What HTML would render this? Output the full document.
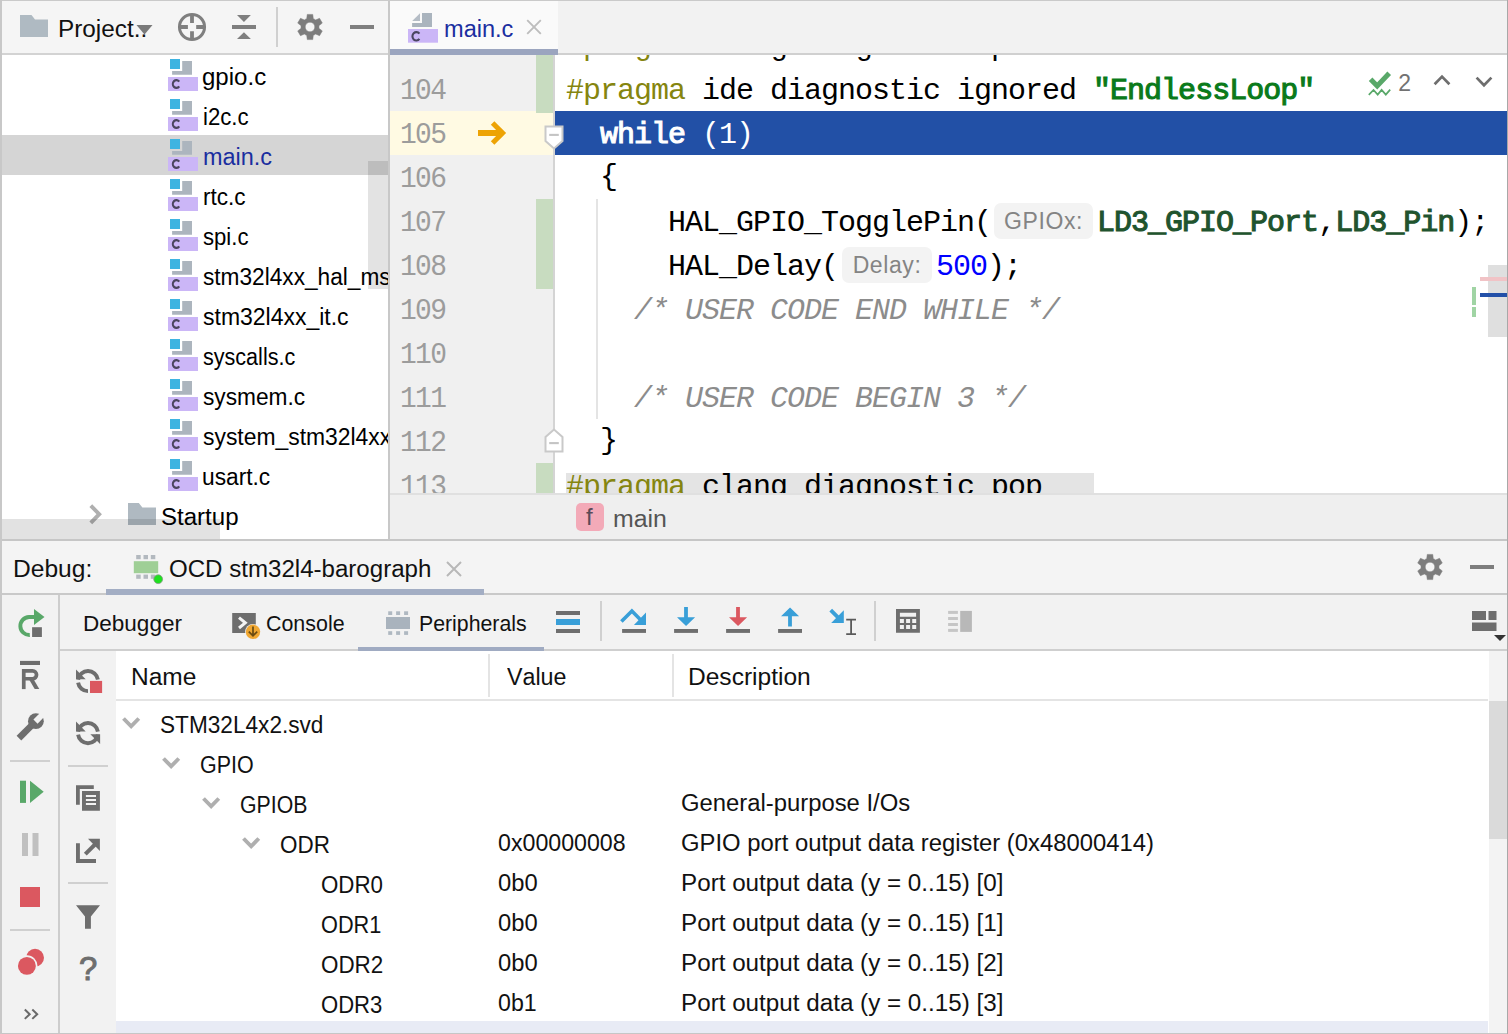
<!DOCTYPE html>
<html><head><meta charset="utf-8">
<style>
*{box-sizing:border-box;margin:0;padding:0}
html,body{width:1508px;height:1034px;overflow:hidden;background:#fff}
body{font-family:"Liberation Sans",sans-serif;color:#000;position:relative}
.abs{position:absolute}
.ui{font-family:"Liberation Sans",sans-serif;font-size:22px;white-space:nowrap;position:absolute;line-height:40px;height:40px;transform-origin:0 0;font-kerning:none}
.mono{font-family:"Liberation Mono",monospace;white-space:pre;position:absolute}
/* frame */
#botb{left:0;top:1033px;width:1508px;height:1px;background:#c6c6c6}
#topb{left:0;top:0;width:1508px;height:1px;background:#cacaca}
#leftb{left:0;top:0;width:2px;height:1034px;background:#c8c8c8}
#rightb{left:1507px;top:0;width:1px;height:1034px;background:#a8a8a8}
/* project panel */
#ptool{left:2px;top:1px;width:386px;height:53px;background:#f5f5f5}
#ptoolb{left:2px;top:53px;width:386px;height:2px;background:#d3d3d3}
#tree{left:2px;top:55px;width:386px;height:484px;background:#fff;overflow:hidden}
#vdiv{left:388px;top:0;width:2px;height:540px;background:#c8c8c8}
/* editor */
#tabs{left:390px;top:1px;width:1117px;height:53px;background:#f2f2f2}
#tabsb{left:390px;top:53px;width:1117px;height:2px;background:#d0d0d0}
#gutter{left:390px;top:55px;width:163px;height:438px;background:#f0f0f0}
#gline{left:553px;top:55px;width:2px;height:438px;background:#d4d4d4}
#code{left:555px;top:55px;width:952px;height:438px;background:#fff;overflow:hidden}
#crumbs{left:390px;top:493px;width:1117px;height:46px;background:#efefef}
#crumbst{left:390px;top:493px;width:1117px;height:2px;background:#e0e0e0}
/* debug */
#hdiv{left:0;top:539px;width:1508px;height:2px;background:#c6c6c6}
#dhead{left:2px;top:541px;width:1505px;height:52px;background:#f4f4f4}
#dheadb{left:2px;top:593px;width:1505px;height:2px;background:#c9c9c9}
#dleft{left:2px;top:595px;width:56px;height:439px;background:#f2f2f2}
#dleftb{left:58px;top:595px;width:2px;height:439px;background:#cdcdcd}
#dtool{left:60px;top:595px;width:1447px;height:54px;background:#f2f2f2}
#dtoolb{left:60px;top:649px;width:1447px;height:2px;background:#cfcfcf}
#dleft2{left:60px;top:651px;width:56px;height:383px;background:#f2f2f2}
#table{left:116px;top:651px;width:1373px;height:383px;background:#fff}
#vsb{left:1489px;top:651px;width:18px;height:383px;background:#f3f3f3}

.ln{font-size:30px;letter-spacing:-1.8px;color:#9c9c9c;line-height:44px;height:44px;transform:scaleX(0.93);transform-origin:0 0}
.cl{font-size:30px;letter-spacing:-1px;color:#000;line-height:44px;height:44px}
.pp{color:#85850f}
.str{color:#0a7a1a;-webkit-text-stroke:1.1px #0a7a1a}
.kwsel{color:#fff;-webkit-text-stroke:1.1px #fff}
.mac{color:#1f542e;-webkit-text-stroke:1.1px #1f542e}
.num{color:#0000ff}
.cm{color:#8c8c8c;font-style:italic}
.hint{display:inline-block;height:36px;line-height:36px;margin:0 4px;border-radius:7px;background:#f3f3f3;color:#848484;font-family:"Liberation Sans",sans-serif;font-size:23px;letter-spacing:0.6px;text-align:center;vertical-align:2px}
</style></head><body>
<div class="abs" id="ptool"></div><div class="abs" id="ptoolb"></div>
<div class="abs" id="tree"></div>
<div class="abs" id="tabs"></div><div class="abs" id="tabsb"></div>
<div class="abs" id="gutter"></div><div class="abs" id="gline"></div>
<div class="abs" id="code"></div>
<div class="abs" id="crumbs"></div><div class="abs" id="crumbst"></div>
<div class="abs" id="vdiv"></div>
<div class="abs" id="dhead"></div><div class="abs" id="dheadb"></div>
<div class="abs" id="dleft"></div><div class="abs" id="dleftb"></div>
<div class="abs" id="dtool"></div><div class="abs" id="dtoolb"></div>
<div class="abs" id="dleft2"></div>
<div class="abs" id="table"></div>
<div class="abs" id="vsb"></div>
<svg width="0" height="0" style="position:absolute"><defs>
<g id="cfile">
  <path d="M12.2 2.1 H22 V15.8 H2.1 V12.1 H12.2 Z" fill="#acb5be"/>
  <rect x="0" y="0" width="10" height="10" fill="#3eb4e1"/>
  <rect x="-2" y="18" width="30" height="14" fill="#cbb6f7"/>
  <path d="M9.2 27.3 A3.5 3.9 0 1 1 9.2 22.7" fill="none" stroke="#4b465f" stroke-width="2.2"/>
</g>
<g id="chev"><path d="M1.5 1.5 L9.15 9.3 L16.8 1.5" fill="none" stroke="#afafaf" stroke-width="3.9"/></g>
<g id="gear">
  <path fill="#7d7d7d" fill-rule="evenodd" stroke="#7d7d7d" stroke-width="0.5" stroke-linejoin="round" d="M-3.30 -8.37L-2.75 -12.60L2.75 -12.60L3.30 -8.37A9.0 9.0 0 0 1 5.60 -7.04L9.54 -8.68L12.29 -3.92L8.90 -1.33A9.0 9.0 0 0 1 8.90 1.33L12.29 3.92L9.54 8.68L5.60 7.04A9.0 9.0 0 0 1 3.30 8.37L2.75 12.60L-2.75 12.60L-3.30 8.37A9.0 9.0 0 0 1 -5.60 7.04L-9.54 8.68L-12.29 3.92L-8.90 1.33A9.0 9.0 0 0 1 -8.90 -1.33L-12.29 -3.92L-9.54 -8.68L-5.60 -7.04A9.0 9.0 0 0 1 -3.30 -8.37ZM4.8 0A4.8 4.8 0 1 0 -4.8 0A4.8 4.8 0 1 0 4.8 0Z"/>
</g>
</defs></svg>
<svg class="abs" style="left:20px;top:15px" width="30" height="24" viewBox="0 0 30 24"><path d="M0 0h11.5l3.5 4.5H28V22H0z" fill="#afbac2"/></svg>
<div class="ui" style="left:57.79px;top:9px;font-size:23px;color:#111;transform:scaleX(1.0572);">Project..</div>
<svg class="abs" style="left:136px;top:24px" width="18" height="12" viewBox="0 0 18 12"><path d="M0.5 1h16L8.5 10.4z" fill="#7a7a7a"/></svg>
<svg class="abs" style="left:176px;top:11px" width="32" height="32" viewBox="0 0 32 32"><circle cx="16" cy="16" r="12.55" fill="none" stroke="#7f7f7f" stroke-width="3"/><path d="M16 3V11.9M16 20.2V29M3 16H11.9M20.2 16H29" stroke="#7f7f7f" stroke-width="3.8"/></svg>
<svg class="abs" style="left:231px;top:14px" width="26" height="26" viewBox="0 0 26 26"><path d="M1 11.1h24v3.8H1z M6 0.9h13.9L12.95 7.9z M12.95 18.2l6.95 6.8H6z" fill="#7f7f7f"/></svg>
<div class="abs" style="left:276px;top:7px;width:2px;height:40px;background:#d0d0d0"></div>
<svg class="abs" style="left:294.7px;top:12.2px" width="30" height="30" viewBox="-15 -15 30 30"><use href="#gear"/></svg>
<div class="abs" style="left:350px;top:25px;width:24px;height:4px;background:#7f7f7f"></div>

<div class="abs" style="left:2px;top:55px;width:386px;height:485px;overflow:hidden"><div class="abs" style="left:0;top:80px;width:386px;height:40px;background:#d5d5d5"></div>
<svg class="abs" style="left:166px;top:3px;overflow:visible" width="34" height="36"><g transform="translate(2,1)"><use href="#cfile"/></g></svg>
<div class="ui" style="left:200.35px;top:2px;font-size:23px;color:#000;transform:scaleX(1.0452);">gpio.c</div>
<svg class="abs" style="left:166px;top:43px;overflow:visible" width="34" height="36"><g transform="translate(2,1)"><use href="#cfile"/></g></svg>
<div class="ui" style="left:200.65px;top:42px;font-size:23px;color:#000;transform:scaleX(0.9646);">i2c.c</div>
<svg class="abs" style="left:166px;top:83px;overflow:visible" width="34" height="36"><g transform="translate(2,1)"><use href="#cfile"/></g></svg>
<div class="ui" style="left:200.57px;top:82px;font-size:23px;color:#1a2ea0;transform:scaleX(1.0198);">main.c</div>
<svg class="abs" style="left:166px;top:123px;overflow:visible" width="34" height="36"><g transform="translate(2,1)"><use href="#cfile"/></g></svg>
<div class="ui" style="left:200.63px;top:122px;font-size:23px;color:#000;transform:scaleX(0.9807);">rtc.c</div>
<svg class="abs" style="left:166px;top:163px;overflow:visible" width="34" height="36"><g transform="translate(2,1)"><use href="#cfile"/></g></svg>
<div class="ui" style="left:200.82px;top:162px;font-size:23px;color:#000;transform:scaleX(0.9610);">spi.c</div>
<svg class="abs" style="left:166px;top:203px;overflow:visible" width="34" height="36"><g transform="translate(2,1)"><use href="#cfile"/></g></svg>
<div class="ui" style="left:200.81px;top:202px;font-size:23px;color:#000;transform:scaleX(0.9850);">stm32l4xx_hal_msp.c</div>
<svg class="abs" style="left:166px;top:243px;overflow:visible" width="34" height="36"><g transform="translate(2,1)"><use href="#cfile"/></g></svg>
<div class="ui" style="left:200.80px;top:242px;font-size:23px;color:#000;transform:scaleX(0.9993);">stm32l4xx_it.c</div>
<svg class="abs" style="left:166px;top:283px;overflow:visible" width="34" height="36"><g transform="translate(2,1)"><use href="#cfile"/></g></svg>
<div class="ui" style="left:200.84px;top:282px;font-size:23px;color:#000;transform:scaleX(0.9372);">syscalls.c</div>
<svg class="abs" style="left:166px;top:323px;overflow:visible" width="34" height="36"><g transform="translate(2,1)"><use href="#cfile"/></g></svg>
<div class="ui" style="left:200.81px;top:322px;font-size:23px;color:#000;transform:scaleX(0.9873);">sysmem.c</div>
<svg class="abs" style="left:166px;top:363px;overflow:visible" width="34" height="36"><g transform="translate(2,1)"><use href="#cfile"/></g></svg>
<div class="ui" style="left:200.80px;top:362px;font-size:23px;color:#000;transform:scaleX(0.9950);">system_stm32l4xx.c</div>
<svg class="abs" style="left:166px;top:403px;overflow:visible" width="34" height="36"><g transform="translate(2,1)"><use href="#cfile"/></g></svg>
<div class="ui" style="left:199.92px;top:402px;font-size:23px;color:#000;transform:scaleX(0.9881);">usart.c</div>
<svg class="abs" style="left:86px;top:448px" width="16" height="24" viewBox="0 0 16 24"><path d="M2.8 2.6 L11.2 11.2 L2.8 19.8" fill="none" stroke="#afafaf" stroke-width="3.9"/></svg>
<svg class="abs" style="left:126px;top:448px" width="30" height="24" viewBox="0 0 30 24"><path d="M0 0h10.8l3.6 4.6H28V22H0z" fill="#afb9c1"/></svg>
<div class="ui" style="left:159.45px;top:442px;font-size:23px;color:#000;transform:scaleX(1.0458);">Startup</div>
<div class="abs" style="left:366px;top:106px;width:20px;height:128px;background:rgba(0,0,0,0.11)"></div>
<div class="abs" style="left:0;top:464px;width:217.5px;height:20px;background:rgba(0,0,0,0.115)"></div></div>
<div class="abs" style="left:390px;top:1px;width:168px;height:48px;background:#fafafa"></div>
<div class="abs" style="left:390px;top:49px;width:168px;height:6px;background:#9ba5bf"></div>
<svg class="abs" style="left:408px;top:12px;overflow:visible" width="32" height="32">
  <path d="M4.2 8.9 L12 1.2 L12 8.9 Z" fill="#b5bdc6"/>
  <path d="M14 1.1 H24 V14.9 H4.1 V11 H14 Z" fill="#aab4be"/>
  <rect x="0" y="17" width="30" height="13.7" fill="#cbb6f7"/>
  <path d="M11.4 26.9 A3.9 4.2 0 1 1 11.4 21.7" fill="none" stroke="#4a4560" stroke-width="2.1"/>
</svg>
<div class="ui" style="left:444.46px;top:9px;font-size:23px;color:#1a2ea0;transform:scaleX(1.0244);">main.c</div>
<svg class="abs" style="left:526px;top:19px" width="16" height="16" viewBox="0 0 16 16"><path d="M1.2 1.2L14.8 14.8M14.8 1.2L1.2 14.8" stroke="#bdbdbd" stroke-width="1.9"/></svg>

<div class="abs" style="left:390px;top:55px;width:163px;height:438px;overflow:hidden"><div class="abs" style="left:0;top:56px;width:163px;height:44px;background:#fffae3"></div>
<div class="abs" style="left:146px;top:0px;width:17px;height:58px;background:#c8dcc0"></div>
<div class="abs" style="left:146px;top:144px;width:17px;height:90px;background:#c8dcc0"></div>
<div class="abs" style="left:146px;top:408px;width:17px;height:30px;background:#c8dcc0"></div>
<div class="mono ln" style="left:10px;top:-30px">103</div>
<div class="mono ln" style="left:10px;top:14px">104</div>
<div class="mono ln" style="left:10px;top:58px">105</div>
<div class="mono ln" style="left:10px;top:102px">106</div>
<div class="mono ln" style="left:10px;top:146px">107</div>
<div class="mono ln" style="left:10px;top:190px">108</div>
<div class="mono ln" style="left:10px;top:234px">109</div>
<div class="mono ln" style="left:10px;top:278px">110</div>
<div class="mono ln" style="left:10px;top:322px">111</div>
<div class="mono ln" style="left:10px;top:366px">112</div>
<div class="mono ln" style="left:10px;top:410px">113</div>
<svg class="abs" style="left:88px;top:66px" width="30" height="24" viewBox="0 0 30 24"><path d="M0 12H24" fill="none" stroke="#eda305" stroke-width="6"/><path d="M14.6 2 L24.6 12 L14.6 22" fill="none" stroke="#eda305" stroke-width="5"/></svg></div>
<div class="abs" style="left:555px;top:55px;width:952px;height:438px;overflow:hidden"><div class="abs" style="left:0;top:56px;width:952px;height:44px;background:#2250a6"></div>
<div class="abs" style="left:11px;top:418px;width:528px;height:30px;background:#e4e4e4"></div>
<div class="abs" style="left:41px;top:144px;width:2px;height:220px;background:#e4e4e4"></div>
<div class="mono cl" style="left:11px;top:-30px"><span class="pp">#pragma</span> clang diagnostic push</div>
<div class="mono cl" style="left:11px;top:14px"><span class="pp">#pragma</span> ide diagnostic ignored <span class="str">"EndlessLoop"</span></div>
<div class="mono cl" style="left:11px;top:58px">  <span class="kwsel">while</span><span style="color:#fff"> (1)</span></div>
<div class="mono cl" style="left:11px;top:102px">  <span style="position:relative;top:-2px">{</span></div>
<div class="mono cl" style="left:11px;top:146px">      HAL_GPIO_TogglePin(<span class="hint" style="width:99px;margin-left:3px">GPIOx:</span><span class="mac">LD3_GPIO_Port</span>,<span class="mac">LD3_Pin</span>);</div>
<div class="mono cl" style="left:11px;top:190px">      HAL_Delay(<span class="hint" style="width:90px">Delay:</span><span class="num">500</span>);</div>
<div class="mono cl" style="left:11px;top:234px">    <span class="cm">/* USER CODE END WHILE */</span></div>
<div class="mono cl" style="left:11px;top:322px">    <span class="cm">/* USER CODE BEGIN 3 */</span></div>
<div class="mono cl" style="left:11px;top:366px">  <span style="position:relative;top:-2px">}</span></div>
<div class="mono cl" style="left:11px;top:410px"><span class="pp">#pragma</span> clang diagnostic pop</div></div>
<svg class="abs" style="left:544px;top:125px" width="20" height="26" viewBox="0 0 20 26"><path d="M1.5 1.6h17v14.4L10 23.4 1.5 16z" fill="#fff" stroke="#c9c9c9" stroke-width="2"/><path d="M5.2 9.9h9.6" stroke="#c4c4c4" stroke-width="2.1"/></svg>
<svg class="abs" style="left:544px;top:427px" width="20" height="26" viewBox="0 0 20 26"><path d="M1.5 24.4h17v-14.4L10 2.6 1.5 10z" fill="#fff" stroke="#c9c9c9" stroke-width="2"/><path d="M5.2 16.1h9.6" stroke="#c4c4c4" stroke-width="2.1"/></svg>

<svg class="abs" style="left:1366px;top:70px" width="28" height="28" viewBox="0 0 28 28"><path d="M4.6 9.2 L11.2 16 L23.2 3.2" fill="none" stroke="#59a869" stroke-width="5"/><path d="M2.8 24.8 L7.5 19.9 L11.7 24.6 L15.6 19.9 L19.8 24.6 L24.2 19.6" fill="none" stroke="#59a869" stroke-width="1.7"/></svg>
<div class="ui" style="left:1398.30px;top:63px;font-size:23px;color:#727272;transform:scaleX(1.0000);">2</div>
<svg class="abs" style="left:1432px;top:72px" width="20" height="16" viewBox="0 0 20 16"><path d="M2.6 12.2 L10 4.6 L17.4 12.2" fill="none" stroke="#6e6e6e" stroke-width="2.7"/></svg>
<svg class="abs" style="left:1474px;top:74px" width="20" height="16" viewBox="0 0 20 16"><path d="M2.6 3.6 L10 11.2 L17.4 3.6" fill="none" stroke="#6e6e6e" stroke-width="2.7"/></svg>

<div class="abs" style="left:1488px;top:265px;width:19px;height:72px;background:#dfdfdf"></div>
<div class="abs" style="left:1480px;top:277px;width:27px;height:4px;background:#f1c3c6"></div>
<div class="abs" style="left:1480px;top:293px;width:27px;height:4px;background:#2350a8"></div>
<div class="abs" style="left:1472px;top:287px;width:4px;height:18px;background:#a0d4a4"></div>
<div class="abs" style="left:1472px;top:307px;width:4px;height:10px;background:#a0d4a4"></div>

<div class="abs" style="left:576px;top:503px;width:28px;height:28px;border-radius:5px;background:#f3aab8"></div>
<div class="ui" style="left:586px;top:497px;font-size:24px;color:#5a4a58">f</div>
<div class="ui" style="left:613.38px;top:499px;font-size:23px;color:#555;transform:scaleX(1.0810);">main</div>

<div class="ui" style="left:13.27px;top:549px;font-size:23px;color:#111;transform:scaleX(1.0684);">Debug:</div>
<div class="abs" style="left:106px;top:589px;width:378px;height:6px;background:#a3aec4"></div>
<svg class="abs" style="left:130px;top:550px" width="40" height="40" viewBox="130 550 40 40">
  <rect x="133.8" y="561.2" width="24.4" height="12" fill="#9fcf96"/>
  <g fill="#b3b9bf"><rect x="136.2" y="555" width="4.5" height="4.2"/><rect x="143.5" y="555" width="4.5" height="4.2"/><rect x="150.8" y="555" width="4.5" height="4.2"/><rect x="136.2" y="574.6" width="4.5" height="4.2"/><rect x="143.5" y="574.6" width="4.5" height="4.2"/><rect x="150.8" y="574.6" width="4.5" height="4.2"/></g>
  <circle cx="158.2" cy="579.2" r="4.4" fill="#1fe01f" stroke="#8a9a8a" stroke-width="0.8"/>
</svg>
<div class="ui" style="left:168.95px;top:549px;font-size:23px;color:#111;transform:scaleX(1.0471);">OCD stm32l4-barograph</div>
<svg class="abs" style="left:446px;top:561px" width="16" height="16" viewBox="0 0 16 16"><path d="M1 1L15 15M15 1L1 15" stroke="#b8b8b8" stroke-width="2"/></svg>
<svg class="abs" style="left:1414.9px;top:552px" width="30" height="30" viewBox="-15 -15 30 30"><use href="#gear"/></svg>
<div class="abs" style="left:1470px;top:565px;width:24px;height:4px;background:#7d7d7d"></div>

<div class="ui" style="left:83.14px;top:604px;font-size:22px;color:#111;transform:scaleX(1.0243);">Debugger</div>
<svg class="abs" style="left:228px;top:608px" width="36" height="36" viewBox="228 608 36 36">
  <rect x="232.2" y="613" width="23.6" height="20" fill="#6e6e6e"/>
  <path d="M239 617.6 L245.3 622.8 L239 628" fill="none" stroke="#f4f4f4" stroke-width="3"/>
  <circle cx="253" cy="631.8" r="7.9" fill="#f1f1f1"/>
  <circle cx="253" cy="631.8" r="7.2" fill="#f0a732"/>
  <path d="M253 626.6v9 M248.8 631.6 L253 635.9 L257.2 631.6" fill="none" stroke="#6a4a10" stroke-width="1.7"/>
</svg>
<div class="ui" style="left:265.68px;top:604px;font-size:22px;color:#111;transform:scaleX(0.9730);">Console</div>
<svg class="abs" style="left:380px;top:605px" width="36" height="36" viewBox="380 605 36 36">
  <rect x="386" y="617" width="24" height="12" fill="#a9b3bd"/>
  <g fill="#afb8c1"><rect x="388.2" y="611.3" width="4" height="3.7"/><rect x="396.1" y="611.3" width="4" height="3.7"/><rect x="404.1" y="611.3" width="4" height="3.7"/><rect x="388.2" y="631.2" width="4" height="3.7"/><rect x="396.1" y="631.2" width="4" height="3.7"/><rect x="404.1" y="631.2" width="4" height="3.7"/></g>
</svg>
<div class="ui" style="left:419.44px;top:604px;font-size:22px;color:#111;transform:scaleX(0.9673);">Peripherals</div>
<div class="abs" style="left:358px;top:647px;width:186px;height:4px;background:#a0abc2"></div>
<!-- threads/list icon -->
<svg class="abs" style="left:555px;top:610px" width="28" height="26" viewBox="0 0 28 26"><rect x="1" y="1" width="24" height="4" fill="#6e6e6e"/><rect x="1" y="9" width="24" height="6" fill="#399fd8"/><rect x="1" y="19" width="24" height="4" fill="#6e6e6e"/></svg>
<div class="abs" style="left:600px;top:601px;width:2px;height:40px;background:#d0d0d0"></div>
<!-- step over -->
<svg class="abs" style="left:620px;top:606px" width="30" height="30" viewBox="0 0 30 30"><path d="M1.4 15.6 L11.9 5.1 L20.5 13.7" fill="none" stroke="#399fd8" stroke-width="3.6"/><path d="M26 6.6V19.1H13.9z" fill="#399fd8"/><rect x="2.1" y="23" width="23.9" height="3.9" fill="#6e6e6e"/></svg>
<!-- step into -->
<svg class="abs" style="left:672px;top:606px" width="30" height="30" viewBox="0 0 30 30"><path d="M12.1 1h3.8v10.2h7.2L14.05 20 5 11.2h7.1z" fill="#399fd8"/><rect x="2.1" y="23" width="23.9" height="3.9" fill="#6e6e6e"/></svg>
<!-- force step into -->
<svg class="abs" style="left:724px;top:606px" width="30" height="30" viewBox="0 0 30 30"><path d="M12.1 1h3.8v10.2h7.2L14.05 20 5 11.2h7.1z" fill="#db5860"/><rect x="2.1" y="23" width="23.9" height="3.9" fill="#6e6e6e"/></svg>
<!-- step out -->
<svg class="abs" style="left:776px;top:606px" width="30" height="30" viewBox="0 0 30 30"><path d="M12.1 20.5h3.8v-10.2h7.2L14.05 1.5 5 10.3h7.1z" fill="#399fd8"/><rect x="2.1" y="23" width="23.9" height="3.9" fill="#6e6e6e"/></svg>
<!-- run to cursor -->
<svg class="abs" style="left:824px;top:604px" width="40" height="36" viewBox="824 604 40 36"><path d="M830.7 610.1 L839.5 618.9" stroke="#399fd8" stroke-width="3.8" fill="none"/><path d="M843.8 610.2 V623 H831.2z" fill="#399fd8"/><path d="M846.2 619.6h9.8 M846.2 634.1h9.8 M851.1 619.6v14.5" stroke="#5a5a5a" stroke-width="1.8" fill="none"/></svg>
<div class="abs" style="left:874px;top:601px;width:2px;height:40px;background:#d0d0d0"></div>
<!-- calculator -->
<svg class="abs" style="left:890px;top:604px" width="36" height="36" viewBox="890 604 36 36"><path fill="#6e6e6e" fill-rule="evenodd" d="M896 609h23.9v23.8H896z M899.9 612.8v4h16.2v-4z M899.9 619v4h4v-4z M906.1 619v4h4v-4z M912.2 619v4h4v-4z M899.9 625.1v4h4v-4z M906.1 625.1v4h4v-4z M912.2 625.1v4h4v-4z"/></svg>
<!-- trace (disabled) -->
<svg class="abs" style="left:944px;top:604px" width="36" height="36" viewBox="944 604 36 36"><g fill="#c6c6c6"><rect x="948.1" y="610.9" width="9.8" height="3"/><rect x="948.1" y="617" width="9.8" height="3"/><rect x="948.1" y="623" width="9.8" height="3"/><rect x="948.1" y="628.9" width="9.8" height="3"/></g><rect x="960.2" y="610.9" width="11.7" height="21" fill="#b8b8b8"/></svg>
<!-- layout -->
<svg class="abs" style="left:1472px;top:610px" width="36" height="34" viewBox="0 0 36 34"><g fill="#6e6e6e"><rect x="0" y="1" width="14" height="9"/><rect x="16.5" y="1" width="8" height="9"/><rect x="0" y="12.5" width="24.5" height="8.5"/></g><path d="M22 25h12l-6 6z" fill="#333"/></svg>


<!-- rerun -->
<svg class="abs" style="left:16px;top:607px" width="32" height="32" viewBox="0 0 32 32"><path d="M13.8 28.05 A9.05 9.05 0 0 1 13 9.95 H19" fill="none" stroke="#59a869" stroke-width="3.9"/><path d="M18 2 L28.5 10 L18 18z" fill="#59a869"/><rect x="15.4" y="19.5" width="11.2" height="11.2" fill="#f6f6f6"/><rect x="16.1" y="20.2" width="9.8" height="9.8" fill="#6e6e6e"/></svg>
<!-- R bar -->
<svg class="abs" style="left:14px;top:656px" width="36" height="40" viewBox="14 656 36 40"><rect x="20" y="660.9" width="20" height="4.1" fill="#6e6e6e"/><rect x="21.9" y="669" width="3.7" height="20.1" fill="#6e6e6e"/><path d="M23.75 670.85 H32.6 A3.95 3.95 0 0 1 32.6 678.75 H23.75" fill="none" stroke="#6e6e6e" stroke-width="3.7"/><path d="M29.4 680 H34 L39.3 689.1 H34.7z" fill="#6e6e6e"/></svg>
<!-- wrench -->
<svg class="abs" style="left:10px;top:706px" width="40" height="40" viewBox="10 706 40 40"><g transform="translate(35.9 721.2) rotate(-45)"><rect x="-24" y="-3.3" width="20" height="6.6" fill="#6e6e6e"/><circle cx="0" cy="0" r="7.9" fill="#6e6e6e"/><rect x="-0.6" y="-2.9" width="10" height="5.8" fill="#f2f2f2"/></g></svg>
<div class="abs" style="left:10px;top:760px;width:40px;height:2px;background:#d0d0d0"></div>
<!-- resume -->
<svg class="abs" style="left:18px;top:778px" width="28" height="28" viewBox="0 0 28 28"><rect x="2" y="2.7" width="6" height="22.2" fill="#59a869"/><path d="M12 2.7 L25.7 13.8 L12 24.9z" fill="#59a869"/></svg>
<!-- pause -->
<svg class="abs" style="left:20px;top:832px" width="22" height="26" viewBox="0 0 22 26"><rect x="2" y="1" width="6" height="23" fill="#c0c0c0"/><rect x="12.5" y="1" width="6" height="23" fill="#c0c0c0"/></svg>
<!-- stop -->
<div class="abs" style="left:20px;top:887px;width:20px;height:20px;background:#db5860"></div>
<div class="abs" style="left:10px;top:929px;width:40px;height:2px;background:#d0d0d0"></div>
<!-- breakpoints -->
<svg class="abs" style="left:10px;top:940px" width="40" height="40" viewBox="10 940 40 40"><circle cx="35.05" cy="957.75" r="8.95" fill="#db5860"/><circle cx="26.9" cy="965.9" r="10.6" fill="#f2f2f2"/><circle cx="26.9" cy="965.9" r="8.95" fill="#db5860"/></svg>
<svg class="abs" style="left:22px;top:1006px" width="20" height="16" viewBox="0 0 20 16"><path d="M2.8 3.5 L7.7 8.2 L2.8 12.9 M10.3 3.5 L15.2 8.2 L10.3 12.9" fill="none" stroke="#6a6a6a" stroke-width="2"/></svg>


<!-- refresh + stop -->
<svg class="abs" style="left:70px;top:660px" width="40" height="40" viewBox="70 660 40 40"><path d="M78.1 679.6 A10 10 0 0 1 97.9 679.6" fill="none" stroke="#6e6e6e" stroke-width="3.9"/><path d="M78.1 682.6 A10 10 0 0 0 88 691.1" fill="none" stroke="#6e6e6e" stroke-width="3.9"/><path d="M76 669.5 V679.3 H85.7z" fill="#6e6e6e"/><rect x="89" y="679.9" width="14" height="14" fill="#f1f1f1"/><rect x="90" y="680.9" width="12.1" height="12.1" fill="#db5860"/></svg>
<!-- refresh -->
<svg class="abs" style="left:70px;top:712px" width="40" height="40" viewBox="70 712 40 40"><path d="M78.1 731.6 A10 10 0 0 1 97.9 731.6" fill="none" stroke="#6e6e6e" stroke-width="3.9"/><path d="M78.1 734.6 A10 10 0 0 0 97.9 734.6" fill="none" stroke="#6e6e6e" stroke-width="3.9"/><path d="M76 721.6 V731.5 H85.7z" fill="#6e6e6e"/><path d="M100.1 744.1 V734.3 H90.4z" fill="#6e6e6e"/></svg>
<div class="abs" style="left:68px;top:765px;width:40px;height:2px;background:#d0d0d0"></div>
<!-- copy -->
<svg class="abs" style="left:70px;top:780px" width="40" height="36" viewBox="70 780 40 36"><path d="M76 785.2 H93.8 V789 H79.8 V804.8 H76z" fill="#6e6e6e"/><path fill="#6e6e6e" fill-rule="evenodd" d="M82 791 H99.9 V810.8 H82z M85.9 795.1 v2 h10.1 v-2z M85.9 799.1 v2 h10.1 v-2z M85.9 803.1 v2 h10.1 v-2z"/></svg>
<!-- export -->
<svg class="abs" style="left:70px;top:832px" width="40" height="36" viewBox="70 832 40 36"><path d="M76 843.2 H79.9 V859.1 H96 V863 H76z" fill="#6e6e6e"/><path d="M88 838.8 H99.9 V850.9z" fill="#6e6e6e"/><path d="M85.3 854.2 L95.5 844" stroke="#6e6e6e" stroke-width="4" fill="none"/></svg>
<div class="abs" style="left:68px;top:882px;width:40px;height:2px;background:#d0d0d0"></div>
<!-- filter -->
<svg class="abs" style="left:70px;top:900px" width="40" height="34" viewBox="70 900 40 34"><path d="M76 905.2 H100 L90.9 916.6 V928.8 H85 V916.6 Z" fill="#6e6e6e"/></svg>
<div class="ui" style="left:79.02px;top:949px;font-size:33px;color:#6e6e6e;transform:scaleX(0.9948);-webkit-text-stroke:1px #6e6e6e;">?</div>

<div class="abs" style="left:116px;top:652px;width:1372px;height:382px;overflow:hidden"><div class="ui" style="left:15.18px;top:5px;font-size:23px;color:#111;transform:scaleX(1.0650);">Name</div>
<div class="abs" style="left:372px;top:2px;width:2px;height:43px;background:#e4e4e4"></div>
<div class="ui" style="left:390.60px;top:5px;font-size:23px;color:#111;transform:scaleX(1.0104);">Value</div>
<div class="abs" style="left:556px;top:2px;width:2px;height:43px;background:#e4e4e4"></div>
<div class="ui" style="left:572.47px;top:5px;font-size:23px;color:#111;transform:scaleX(1.0671);">Description</div>
<div class="abs" style="left:0;top:47px;width:1372px;height:2px;background:#e4e4e4"></div>
<svg class="abs" style="left:6px;top:65px" width="19" height="13" viewBox="0 0 19 13"><use href="#chev"/></svg>
<div class="ui" style="left:44.12px;top:53px;font-size:23px;color:#111;transform:scaleX(0.9835);">STM32L4x2.svd</div>
<svg class="abs" style="left:46px;top:105px" width="19" height="13" viewBox="0 0 19 13"><use href="#chev"/></svg>
<div class="ui" style="left:84.28px;top:93px;font-size:23px;color:#111;transform:scaleX(0.9313);">GPIO</div>
<svg class="abs" style="left:86px;top:145px" width="19" height="13" viewBox="0 0 19 13"><use href="#chev"/></svg>
<div class="ui" style="left:124.38px;top:133px;font-size:23px;color:#111;transform:scaleX(0.9248);">GPIOB</div>
<div class="ui" style="left:565.46px;top:131px;font-size:23px;color:#111;transform:scaleX(1.0360);">General-purpose I/Os</div>
<svg class="abs" style="left:126px;top:185px" width="19" height="13" viewBox="0 0 19 13"><use href="#chev"/></svg>
<div class="ui" style="left:164.13px;top:173px;font-size:23px;color:#111;transform:scaleX(0.9755);">ODR</div>
<div class="ui" style="left:382.09px;top:171px;font-size:23px;color:#111;transform:scaleX(1.0080);">0x00000008</div>
<div class="ui" style="left:565.46px;top:171px;font-size:23px;color:#111;transform:scaleX(1.0361);">GPIO port output data register (0x48000414)</div>
<div class="ui" style="left:204.53px;top:213px;font-size:23px;color:#111;transform:scaleX(0.9693);">ODR0</div>
<div class="ui" style="left:382.07px;top:211px;font-size:23px;color:#111;transform:scaleX(1.0328);">0b0</div>
<div class="ui" style="left:564.60px;top:211px;font-size:23px;color:#111;transform:scaleX(1.0531);">Port output data (y = 0..15) [0]</div>
<div class="ui" style="left:204.56px;top:253px;font-size:23px;color:#111;transform:scaleX(0.9433);">ODR1</div>
<div class="ui" style="left:382.07px;top:251px;font-size:23px;color:#111;transform:scaleX(1.0328);">0b0</div>
<div class="ui" style="left:564.60px;top:251px;font-size:23px;color:#111;transform:scaleX(1.0531);">Port output data (y = 0..15) [1]</div>
<div class="ui" style="left:204.53px;top:293px;font-size:23px;color:#111;transform:scaleX(0.9740);">ODR2</div>
<div class="ui" style="left:382.07px;top:291px;font-size:23px;color:#111;transform:scaleX(1.0328);">0b0</div>
<div class="ui" style="left:564.60px;top:291px;font-size:23px;color:#111;transform:scaleX(1.0531);">Port output data (y = 0..15) [2]</div>
<div class="ui" style="left:204.54px;top:333px;font-size:23px;color:#111;transform:scaleX(0.9595);">ODR3</div>
<div class="ui" style="left:382.09px;top:331px;font-size:23px;color:#111;transform:scaleX(1.0082);">0b1</div>
<div class="ui" style="left:564.60px;top:331px;font-size:23px;color:#111;transform:scaleX(1.0531);">Port output data (y = 0..15) [3]</div>
<div class="abs" style="left:0;top:369px;width:1372px;height:13px;background:#e8ebf5"></div></div>
<div class="abs" style="left:1489px;top:701px;width:18px;height:138px;background:#dadada"></div>
<div class="abs" id="hdiv"></div>
<div class="abs" id="botb"></div><div class="abs" id="topb"></div><div class="abs" id="leftb"></div><div class="abs" id="rightb"></div>
</body></html>
